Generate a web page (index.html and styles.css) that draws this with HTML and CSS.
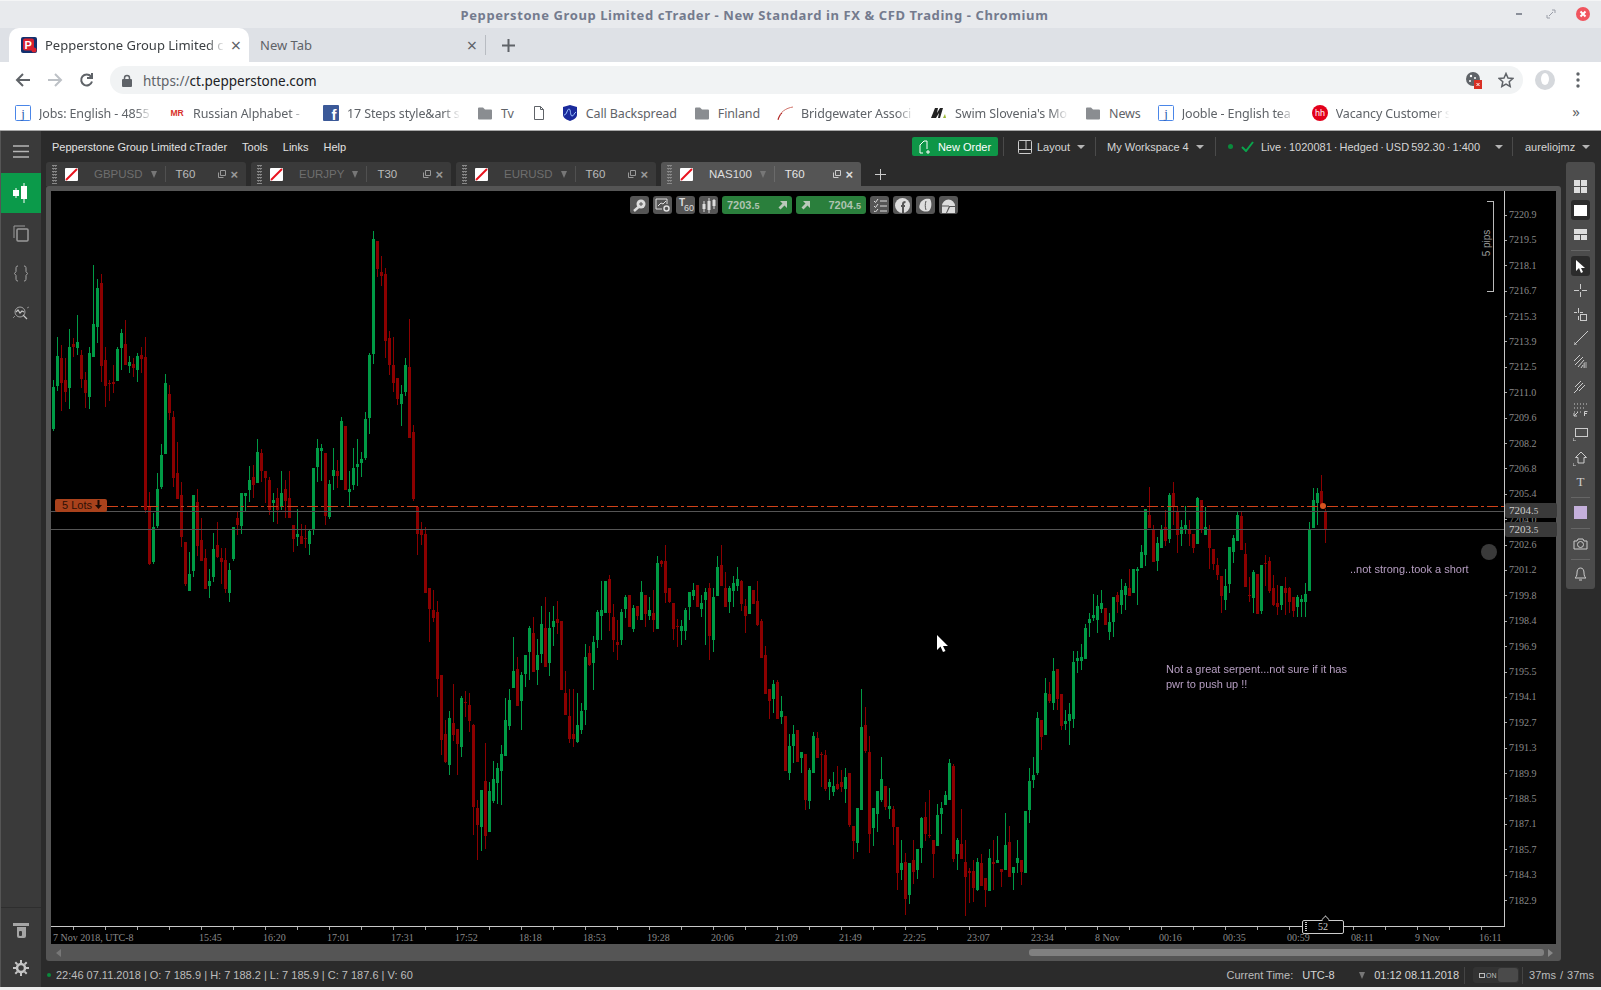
FILE: index.html
```html
<!DOCTYPE html>
<html lang="en">
<head>
    <meta charset="UTF-8">
    <title>Pepperstone Group Limited cTrader</title>
    <link rel="stylesheet" href="styles.css">
</head>
<body>

<!-- browser chrome -->
<div class="titlebar">
    <span class="title">Pepperstone Group Limited cTrader - New Standard in FX &amp; CFD Trading - Chromium</span>
    <div class="win-btns">
        <svg width="10" height="10" viewBox="0 0 10 10"><path d="M2 5h6" stroke="#8a8f99" stroke-width="2"/></svg>
        <svg width="10" height="10" viewBox="0 0 10 10"><path d="M6 1h3v3M4 9H1V6M3 7l4-4" stroke="#9a9ea8" fill="none"/></svg>
        <span class="win-close">
            <svg width="14" height="14" viewBox="0 0 14 14"><path d="M4.500 4.500l5 5M9.500 4.500l-5 5" stroke="#fff" stroke-width="2"/></svg>
        </span>
    </div>
</div>

<div class="tabstrip">
    <div class="tab active">
        <svg class="favicon" width="16" height="16" viewBox="0 0 16 16">
            <rect width="16" height="16" rx="2" fill="#12306e"/>
            <rect x="2" y="1.500" width="11" height="12" rx="2" fill="#d8212f"/>
            <text x="3.500" y="11.500" font-family="Liberation Sans" font-weight="700" font-size="11" fill="#fff">P</text>
            <circle cx="13" cy="13" r="2.500" fill="#d8212f"/>
        </svg>
        <span class="tab-title">Pepperstone Group Limited c</span>
        <span class="tab-x">×</span>
    </div>
    <div class="tab tab-plain">
        <span class="tab-title">New Tab</span>
        <span class="tab-x">×</span>
    </div>
    <span class="tab-sep"></span>
    <svg class="tab-new" width="13" height="13" viewBox="0 0 13 13"><path d="M6.500 0v13M0 6.500h13" stroke="#5f6368" stroke-width="2"/></svg>
</div>

<div class="toolbar">
    <svg class="nav" width="16" height="16" viewBox="0 0 16 16"><path d="M15 8H2M8 2L2 8l6 6" stroke="#5f6368" stroke-width="2" fill="none"/></svg>
    <svg class="nav" width="16" height="16" viewBox="0 0 16 16"><path d="M1 8h13M8 2l6 6-6 6" stroke="#bdc1c6" stroke-width="2" fill="none"/></svg>
    <svg class="nav" width="16" height="16" viewBox="0 0 16 16"><path d="M13 9.500A5.500 5.500 0 1 1 12 4.500M13 1v5H8" stroke="#5f6368" stroke-width="2" fill="none"/></svg>
    <div class="omnibox">
        <svg width="10" height="13" viewBox="0 0 10 13"><path d="M2.500 6V4a2.500 2.500 0 0 1 5 0v2" stroke="#5f6368" stroke-width="1.500" fill="none"/><rect y="5" width="10" height="8" rx="1" fill="#5f6368"/></svg>
        <span class="url"><span class="url-scheme">https://</span>ct.pepperstone.com</span>
        <svg class="omni-cookie" width="16" height="18" viewBox="0 0 16 18">
            <circle cx="7" cy="8" r="7" fill="#5f6368"/>
            <circle cx="5" cy="5" r="1.200" fill="#fff"/><circle cx="9" cy="7" r="1" fill="#fff"/><circle cx="4" cy="10" r="1" fill="#fff"/>
            <rect x="8" y="9" width="8" height="9" fill="#d93025"/>
            <path d="M10.500 12l3 3M13.500 12l-3 3" stroke="#fff"/>
        </svg>
        <svg class="omni-star" width="16" height="16" viewBox="0 0 16 16"><path d="M8 1.500l2 4.500 4.800.5-3.600 3.200 1 4.800L8 12.100l-4.200 2.400 1-4.800L1.200 6.500 6 6z" stroke="#5f6368" stroke-width="1.500" fill="none"/></svg>
    </div>
    <svg class="avatar" width="20" height="22" viewBox="0 0 20 22"><circle cx="10" cy="11" r="10" fill="#d5d8dc"/><ellipse cx="10" cy="10" rx="4" ry="6" fill="#fff"/></svg>
    <svg class="menu-dots" width="4" height="16" viewBox="0 0 4 16"><circle cx="2" cy="2" r="1.700" fill="#5f6368"/><circle cx="2" cy="8" r="1.700" fill="#5f6368"/><circle cx="2" cy="14" r="1.700" fill="#5f6368"/></svg>
</div>

<div class="bookmarks">
    <a class="bm">
        <svg class="bm-icon" viewBox="0 0 16 16"><rect x=".5" y=".5" width="15" height="15" rx="1" fill="#fff" stroke="#4a86e8"/><text x="8" y="13" text-anchor="middle" font-family="Liberation Serif" font-size="13" fill="#2a5db0">j</text></svg>
        <span class="bm-text fade">Jobs: English - 4855</span>
    </a>
    <a class="bm">
        <svg class="bm-icon" viewBox="0 0 16 16"><text x="8" y="11" text-anchor="middle" font-family="Liberation Sans" font-weight="700" font-size="8.500" fill="#d8312a">MR</text></svg>
        <span class="bm-text fade">Russian Alphabet -</span>
    </a>
    <a class="bm">
        <svg class="bm-icon" viewBox="0 0 16 16"><rect width="16" height="16" rx="1" fill="#3b5998"/><text x="11" y="15" text-anchor="middle" font-family="Liberation Sans" font-weight="700" font-size="15" fill="#fff">f</text></svg>
        <span class="bm-text fade">17 Steps style&amp;art s</span>
    </a>
    <a class="bm">
        <svg class="bm-icon"><use href="#folder"/></svg>
        <span class="bm-text">Tv</span>
    </a>
    <a class="bm bm-bare">
        <svg class="bm-icon" viewBox="0 0 16 16"><path d="M3.500 1.500h6l3 3v10h-9zM9.500 1.500v3h3" stroke="#5f6368" fill="#fff"/></svg>
    </a>
    <a class="bm">
        <svg class="bm-icon" viewBox="0 0 16 16"><path d="M1 2l7-2 7 2v8c0 3-4 5-7 6-3-1-7-3-7-6z" fill="#1a2a9c"/><path d="M2 10c3 0 3-6 5-6s1 7 3 7 2-3 4-4" stroke="#9ec5ff" fill="none"/></svg>
        <span class="bm-text">Call Backspread</span>
    </a>
    <a class="bm">
        <svg class="bm-icon"><use href="#folder"/></svg>
        <span class="bm-text">Finland</span>
    </a>
    <a class="bm">
        <svg class="bm-icon" viewBox="0 0 16 16"><path d="M1 14C3 7 9 3 16 2" stroke="#d0736a" fill="none"/><path d="M1 15c1-3 2-5 4-7" stroke="#b02020" fill="none"/></svg>
        <span class="bm-text fade">Bridgewater Associ</span>
    </a>
    <a class="bm">
        <svg class="bm-icon" viewBox="0 0 16 16"><path d="M0 13L4 3h3l-1 5 3-5h3l-3 10H7l1-5-3 5z" fill="#222"/><path d="M12 13l2-4 1 4z" fill="#9ab833"/></svg>
        <span class="bm-text fade">Swim Slovenia's Mo</span>
    </a>
    <a class="bm">
        <svg class="bm-icon"><use href="#folder"/></svg>
        <span class="bm-text">News</span>
    </a>
    <a class="bm">
        <svg class="bm-icon" viewBox="0 0 16 16"><rect x=".5" y=".5" width="15" height="15" rx="1" fill="#fff" stroke="#4a86e8"/><text x="8" y="13" text-anchor="middle" font-family="Liberation Serif" font-size="13" fill="#2a5db0">j</text></svg>
        <span class="bm-text fade">Jooble - English tea</span>
    </a>
    <a class="bm">
        <svg class="bm-icon" viewBox="0 0 16 16"><circle cx="8" cy="8" r="8" fill="#e3001b"/><text x="8" y="11" text-anchor="middle" font-family="Liberation Sans" font-size="9" fill="#fff">hh</text></svg>
        <span class="bm-text fade">Vacancy Customer s</span>
    </a>
    <span class="bm-more">»</span>
</div>

<svg class="defs" width="0" height="0">
    <symbol id="folder" viewBox="0 0 16 16"><path d="M1 3.500a1 1 0 0 1 1-1h4l2 2h6a1 1 0 0 1 1 1v8a1 1 0 0 1-1 1H2a1 1 0 0 1-1-1z" fill="#8a8d91"/></symbol>
    <symbol id="no-chart" viewBox="0 0 13 13"><rect width="13" height="13" rx="1" fill="#fff"/><path d="M1 12L12 1" stroke="#e8121d" stroke-width="2"/></symbol>
</svg>

<!-- cTrader -->
<div class="app">
    <aside class="rail">
        <div class="rail-item rail-menu">
            <svg width="16" height="13" viewBox="0 0 16 13"><path d="M0 1h16M0 6.500h16M0 12h16" stroke="#b5b5b5" stroke-width="1.500"/></svg>
        </div>
        <div class="rail-item rail-on">
            <svg width="16" height="20" viewBox="0 0 16 20"><path d="M3 5v10M11 0v20" stroke="#fff"/><rect x="0" y="7" width="6" height="6" fill="#fff"/><rect x="8" y="3" width="6" height="13" fill="#fff"/></svg>
        </div>
        <div class="rail-item">
            <svg width="16" height="17" viewBox="0 0 16 17"><path d="M12 1H1v12" stroke="#9a9a9a" fill="none"/><rect x="4" y="4" width="11" height="12" rx="1" stroke="#9a9a9a" fill="none" stroke-width="1.500"/></svg>
        </div>
        <div class="rail-item">
            <svg width="14" height="17" viewBox="0 0 14 17"><path d="M4 1C2 1 2 2 2 4v2.500L.5 8.500 2 10.500V13c0 2 0 3 2 3M10 1c2 0 2 1 2 3v2.500l1.500 2L12 10.500V13c0 2 0 3-2 3" stroke="#a5a5a5" fill="none"/></svg>
        </div>
        <div class="rail-item">
            <svg width="17" height="15" viewBox="0 0 17 15"><circle cx="7" cy="6" r="5" stroke="#a5a5a5" fill="none"/><path d="M3 6l2-2 2 3 2-2 2 1M10 9l4 4" stroke="#c5c5c5" stroke-width="1.200" fill="none"/><path d="M0 12l2-2M14 2l2-1" stroke="#888" fill="none"/></svg>
        </div>
        <div class="rail-bottom">
            <div class="rail-item rail-small">
                <svg width="16" height="15" viewBox="0 0 16 15"><path d="M0 0h16v3H0z" fill="#a5a5a5"/><path d="M4 4h9v9a2 2 0 0 1-2 2H6a2 2 0 0 1-2-2z" fill="#a5a5a5"/><rect x="6" y="8" width="3" height="5" rx="1" fill="#3a3a3a"/></svg>
            </div>
            <div class="rail-item rail-small">
                <svg width="16" height="16" viewBox="0 0 16 16"><circle cx="8" cy="8" r="4" stroke="#c5c5c5" stroke-width="2.500" fill="none"/><path d="M8 0v3M8 13v3M0 8h3M13 8h3M2.300 2.300l2.100 2.100M11.600 11.600l2.100 2.100M2.300 13.700l2.100-2.100M11.600 4.400l2.100-2.100" stroke="#c5c5c5" stroke-width="2"/></svg>
            </div>
        </div>
    </aside>

    <div class="main">
        <header class="menubar">
            <span class="brand">Pepperstone Group Limited cTrader</span>
            <span class="menu-link">Tools</span>
            <span class="menu-link">Links</span>
            <span class="menu-link">Help</span>
            <div class="menubar-right">
                <button class="new-order">
                    <svg width="12" height="14" viewBox="0 0 12 14"><path d="M1 13V5l4-4h3v8M4 13H1M9 10v4M7 12h4" stroke="#fff" fill="none"/></svg>
                    New Order
                </button>
                <div class="hdr-item hdr-layout">
                    <svg width="14" height="14" viewBox="0 0 14 14"><rect x=".5" y=".5" width="13" height="13" rx="1" stroke="#ccc" fill="none"/><path d="M.5 9.500h13M8 .5v9" stroke="#ccc"/></svg>
                    <span>Layout</span><i class="caret"></i>
                </div>
                <div class="hdr-item hdr-workspace">
                    <span>My Workspace 4</span><i class="caret"></i>
                </div>
                <div class="hdr-item hdr-account">
                    <i class="live-dot"></i>
                    <svg width="13" height="11" viewBox="0 0 13 11"><path d="M1 6l4 4 7-9" stroke="#0aa44c" stroke-width="2" fill="none"/></svg>
                    <span>Live · 1020081 · Hedged · USD 592.30 · 1:400</span><i class="caret"></i>
                </div>
                <div class="hdr-item hdr-user">
                    <span>aureliojmz</span><i class="caret"></i>
                </div>
            </div>
        </header>

        <div class="workspace">
            <div class="chart-col">
                <nav class="chart-tabs">
                    <div class="ctab">
                        <i class="grip"></i>
                        <svg class="ctab-icon"><use href="#no-chart"/></svg>
                        <span class="ctab-sym">GBPUSD</span><i class="caret caret-dim"></i>
                        <span class="ctab-sep"></span><span class="ctab-tf">T60</span>
                        <svg class="ctab-pop" width="8" height="8" viewBox="0 0 8 8"><path d="M2.500.5h5v5h-5zM.5 2.500v5h5" stroke="#999" fill="none"/></svg>
                        <span class="ctab-x">×</span>
                    </div>
                    <div class="ctab">
                        <i class="grip"></i>
                        <svg class="ctab-icon"><use href="#no-chart"/></svg>
                        <span class="ctab-sym">EURJPY</span><i class="caret caret-dim"></i>
                        <span class="ctab-sep"></span><span class="ctab-tf">T30</span>
                        <svg class="ctab-pop" width="8" height="8" viewBox="0 0 8 8"><path d="M2.500.5h5v5h-5zM.5 2.500v5h5" stroke="#999" fill="none"/></svg>
                        <span class="ctab-x">×</span>
                    </div>
                    <div class="ctab">
                        <i class="grip"></i>
                        <svg class="ctab-icon"><use href="#no-chart"/></svg>
                        <span class="ctab-sym">EURUSD</span><i class="caret caret-dim"></i>
                        <span class="ctab-sep"></span><span class="ctab-tf">T60</span>
                        <svg class="ctab-pop" width="8" height="8" viewBox="0 0 8 8"><path d="M2.500.5h5v5h-5zM.5 2.500v5h5" stroke="#999" fill="none"/></svg>
                        <span class="ctab-x">×</span>
                    </div>
                    <div class="ctab ctab-on">
                        <i class="grip"></i>
                        <svg class="ctab-icon"><use href="#no-chart"/></svg>
                        <span class="ctab-sym">NAS100</span><i class="caret caret-dim"></i>
                        <span class="ctab-sep"></span><span class="ctab-tf">T60</span>
                        <svg class="ctab-pop" width="8" height="8" viewBox="0 0 8 8"><path d="M2.500.5h5v5h-5zM.5 2.500v5h5" stroke="#ccc" fill="none"/></svg>
                        <span class="ctab-x">×</span>
                    </div>
                    <svg class="ctab-add" width="11" height="11" viewBox="0 0 11 11"><path d="M5.500 0v11M0 5.500h11" stroke="#ccc"/></svg>
                </nav>

                <section class="frame">
                    <div class="chart">
                        <div class="plot">
                            <svg id="candles" class="candles" width="1454" height="735" viewBox="51 191 1454 735"></svg>

                            <span class="line line-order"></span>
                            <span class="line line-bid"></span>
                            <span class="line line-ask"></span>
                            <span class="lots">5 Lots <svg width="7" height="9" viewBox="0 0 7 9"><path d="M2.500 0h2v5H7L3.500 9 0 5h2.500z" fill="#1f0b04"/></svg></span>
                            <span class="order-dot"></span>
                            <span class="note-dot"></span>
                            <p class="note note-serpent">Not a great serpent...not sure if it has<br>pwr to push up !!</p>
                            <p class="note note-short">..not strong..took a short</p>

                            <div class="pips"><span>5 pips</span></div>

                            <svg class="pointer" width="11" height="18" viewBox="0 0 11 18"><path d="M0 0v15l3.500-3.500L6 17l2.500-1-2.500-5h5z" fill="#fff"/></svg>

                            <div class="quick-bar">
                                <span class="qb">
                                    <svg width="13" height="13" viewBox="0 0 13 13"><circle cx="8" cy="5" r="4.500" fill="#ddd"/><path d="M5.500 8L1 12" stroke="#ddd" stroke-width="2.500"/><path d="M6 5h4M8 3v4" stroke="#555"/></svg>
                                </span>
                                <span class="qb">
                                    <svg width="15" height="14" viewBox="0 0 15 14"><path d="M7 11H1V1h11v5" stroke="#ddd" fill="none"/><path d="M3 8l3-3 2 1 3-3" stroke="#ddd" fill="none"/><circle cx="11.500" cy="10.500" r="2.500" stroke="#ddd" stroke-width="1.500" fill="none"/></svg>
                                </span>
                                <span class="qb qb-tf"><b>T</b><small>60</small></span>
                                <span class="qb">
                                    <svg width="14" height="15" viewBox="0 0 14 15"><path d="M2 3v11M7 0v15M12 1v10" stroke="#ddd"/><rect x=".5" y="6" width="3" height="5" fill="#ddd"/><rect x="5.500" y="3" width="3" height="9" fill="#ddd"/><rect x="10.500" y="2" width="3" height="6" fill="#ddd"/></svg>
                                </span>
                                <span class="qb-price">7203.<small>5</small><svg width="9" height="9" viewBox="0 0 9 9"><path d="M2 0h7v7L6.500 4.500 2.500 8.500 .5 6.500l4-4z" fill="#b9c9bb"/></svg></span>
                                <span class="qb-price qb-price-buy"><svg width="9" height="9" viewBox="0 0 9 9"><path d="M2 0h7v7L6.500 4.500 2.500 8.500 .5 6.500l4-4z" fill="#b9c9bb"/></svg>7204.<small>5</small></span>
                                <span class="qb">
                                    <svg width="14" height="13" viewBox="0 0 14 13"><path d="M1 2l1.500 1.500L5 0M1 7l1.500 1.500L5 5M1 12l1.500 1L5 10M7 2h7M7 7h7M7 12h7" stroke="#ddd" fill="none"/></svg>
                                </span>
                                <span class="qb">
                                    <svg width="15" height="15" viewBox="0 0 15 15"><circle cx="7.500" cy="7.500" r="7.500" fill="#ddd"/><path d="M8 15V8H10M8 8V6c0-1.500 1-2 2.500-2M6 8h2" stroke="#555" stroke-width="2" fill="none"/></svg>
                                </span>
                                <span class="qb">
                                    <svg width="15" height="15" viewBox="0 0 15 15"><path d="M2 6c1-4 6-6 10-5 2 3 2 9-1 12-3 1-6 1-9-2-1-1-1-3 0-5z" fill="#ddd"/><path d="M8 3c-1 3-1 6 0 9" stroke="#555" fill="none"/></svg>
                                </span>
                                <span class="qb">
                                    <svg width="15" height="15" viewBox="0 0 15 15"><path d="M1 8a6.500 6.500 0 0 1 13 0h-6l-3 7H1z" fill="#ddd"/><path d="M9 9h5v6H6z" fill="#ddd"/><path d="M1 8h7" stroke="#555"/></svg>
                                </span>
                            </div>
                        </div>

                        <div class="price-axis">
                            <span>7220.9</span><span>7219.5</span><span>7218.1</span><span>7216.7</span>
                            <span>7215.3</span><span>7213.9</span><span>7212.5</span><span>7211.0</span>
                            <span>7209.6</span><span>7208.2</span><span>7206.8</span><span>7205.4</span>
                            <span>7204.0</span><span>7202.6</span><span>7201.2</span><span>7199.8</span>
                            <span>7198.4</span><span>7196.9</span><span>7195.5</span><span>7194.1</span>
                            <span>7192.7</span><span>7191.3</span><span>7189.9</span><span>7188.5</span>
                            <span>7187.1</span><span>7185.7</span><span>7184.3</span><span>7182.9</span>
                            <div class="price-tag tag-bid">7204.<small>5</small></div>
                            <div class="price-tag tag-ask">7203.<small>5</small></div>
                        </div>

                        <div class="time-axis">
                            <span class="t-first">7 Nov 2018, UTC-8</span>
                            <span>15:45</span><span>16:20</span><span>17:01</span><span>17:31</span><span>17:52</span>
                            <span>18:18</span><span>18:53</span><span>19:28</span><span>20:06</span><span>21:09</span>
                            <span>21:49</span><span>22:25</span><span>23:07</span><span>23:34</span><span>8 Nov</span>
                            <span>00:16</span><span>00:35</span><span>00:59</span><span>08:11</span><span>9 Nov</span><span>16:11</span>
                            <div class="zoom-box"><i></i>52</div>
                        </div>
                    </div>
                    <div class="scroll">
                        <i class="arrow-left"></i>
                        <div class="scroll-thumb"></div>
                        <i class="arrow-right"></i>
                    </div>
                </section>
            </div>

            <aside class="tools">
                <i class="tools-grip"></i>
                <span class="tool"><svg width="13" height="13" viewBox="0 0 13 13"><path d="M0 0h6v6H0zM7 0h6v6H7zM0 7h6v6H0zM7 7h6v6H7z" fill="#ddd"/></svg></span>
                <span class="tool tool-on"><svg width="13" height="11" viewBox="0 0 13 11"><rect width="13" height="11" fill="#fff"/></svg></span>
                <span class="tool"><svg width="13" height="11" viewBox="0 0 13 11"><path d="M0 0h13v5H0zM0 6h6v5H0zM7 6h6v5H7z" fill="#ddd"/></svg></span>
                <i class="tool-sep"></i>
                <span class="tool tool-on"><svg width="11" height="13" viewBox="0 0 11 13"><path d="M1 0v11l3-3 2 5 2-1-2-4h4z" fill="#fff"/></svg></span>
                <span class="tool"><svg width="13" height="13" viewBox="0 0 13 13"><path d="M6.500 0v5M6.500 8v5M0 6.500h5M8 6.500h5" stroke="#ccc"/></svg></span>
                <span class="tool"><svg width="13" height="13" viewBox="0 0 13 13"><path d="M4.500 0v5M4.500 8v4M0 4.500h3M6 4.500h3" stroke="#ccc"/><rect x="6.500" y="6.500" width="6" height="6" stroke="#ccc" fill="none"/></svg></span>
                <span class="tool"><svg width="14" height="14" viewBox="0 0 14 14"><path d="M1 13L14 0" stroke="#ccc"/><path d="M0 11v3h3" stroke="#ccc" fill="none"/></svg></span>
                <span class="tool"><svg width="14" height="14" viewBox="0 0 14 14"><path d="M0 6l6-6M1 10l8-8M4 12l6-7M7 13l2-3" stroke="#ccc" fill="none"/><path d="M10 8h3M10 10h3M10 12h3M10 8v5" stroke="#ccc" stroke-width=".8"/></svg></span>
                <span class="tool"><svg width="13" height="13" viewBox="0 0 13 13"><path d="M1 7l6-6M3 9l6-6M5 11l6-6M0 13l4-4" stroke="#ccc" fill="none"/></svg></span>
                <span class="tool"><svg width="15" height="14" viewBox="0 0 15 14"><path d="M1 1h13M1 5h10M1 9h7" stroke="#ccc" stroke-dasharray="1 2"/><path d="M1 10v3h3M1 13l4-4" stroke="#ccc" fill="none"/><path d="M11.500 13V8.500h3M11.500 10.500h2.500" stroke="#ccc" fill="none"/></svg></span>
                <span class="tool"><svg width="15" height="13" viewBox="0 0 15 13"><rect x="2.500" y=".5" width="12" height="8" stroke="#ccc" fill="none"/><path d="M0 10v3h3" stroke="#ccc" fill="none"/></svg></span>
                <span class="tool"><svg width="15" height="15" viewBox="0 0 15 15"><path d="M8 1l5.500 5.500H11V12H5V6.500H2.500z" stroke="#ccc" fill="none"/><path d="M0 12v3h3" stroke="#ccc" fill="none"/></svg></span>
                <span class="tool tool-t">T</span>
                <i class="tool-sep thin"></i>
                <span class="tool"><i class="swatch"></i></span>
                <i class="tool-sep"></i>
                <span class="tool"><svg width="15" height="12" viewBox="0 0 15 12"><path d="M1 3h3l1-2h5l1 2h3v8H1z" stroke="#ccc" fill="none"/><circle cx="7.500" cy="6.500" r="3" stroke="#ccc" fill="none"/></svg></span>
                <i class="tool-sep thin"></i>
                <span class="tool"><svg width="13" height="14" viewBox="0 0 13 14"><path d="M1 11c1-1 2-2 2-5s1-5 3.500-5S10 3 10 6s1 4 2 5zM5 13h3" stroke="#ccc" fill="none"/></svg></span>
            </aside>
        </div>

        <footer class="statusbar">
            <i class="status-dot"></i>
            <span class="ohlc">22:46 07.11.2018 | O: 7 185.9 | H: 7 188.2 | L: 7 185.9 | C: 7 187.6 | V: 60</span>
            <div class="status-right">
                <span class="st-label">Current Time:</span>
                <span class="st-zone">UTC-8</span>
                <i class="caret caret-dim"></i>
                <span class="st-time">01:12 08.11.2018</span>
                <div class="st-toggle">
                    <svg width="6" height="5" viewBox="0 0 6 5"><rect x=".5" y=".5" width="5" height="4" stroke="#bbb" fill="none"/></svg>
                    <span>ON</span><i></i>
                </div>
                <span class="st-ping">37ms / 37ms</span>
            </div>
        </footer>
    </div>
</div>

<script src="chart.js"></script>
</body>
</html>
```

FILE: styles.css
```css
* {
    box-sizing: border-box;
}

html, body {
    margin: 0;
    height: 100%;
    overflow: hidden;
}

body {
    display: flex;
    flex-direction: column;
    background: #ededed;
    font-family: "Noto Sans", sans-serif;
}

i {
    display: block;
    font-style: normal;
}

.defs {
    position: absolute;
}

/* Browser window */
.titlebar {
    height: 28px;
    flex: none;
    position: relative;
    display: flex;
    align-items: center;
    justify-content: center;
    padding-right: 92px;
    background: #e8eaed;
    border-top: 1px solid #f4f5f6;
}

.title {
    font-size: 13px;
    font-weight: 700;
    letter-spacing: 0.6px;
    color: #747b8e;
}

.win-btns {
    position: absolute;
    right: 11px;
    top: 6px;
    display: flex;
    align-items: center;
    gap: 22px;
}

.win-close {
    width: 14px;
    height: 14px;
    margin-left: -2px;
    border-radius: 50%;
    background: #f0555f;
    display: flex;
    align-items: center;
    justify-content: center;
}

.tabstrip {
    height: 34px;
    flex: none;
    display: flex;
    align-items: center;
    padding-left: 9px;
    background: #dee1e6;
}

.tab {
    width: 240px;
    height: 34px;
    display: flex;
    align-items: center;
    padding: 0 8px 0 12px;
    border-radius: 10px 10px 0 0;
    color: #5f6368;
    font-size: 13px;
}

.tab.active {
    background: #fff;
    color: #3c4043;
}

.tab-plain {
    width: 236px;
    padding-left: 11px;
}

.favicon {
    margin-right: 8px;
    flex: none;
}

.tab-title {
    flex: 1;
    white-space: nowrap;
    overflow: hidden;
}

.tab.active .tab-title {
    -webkit-mask-image: linear-gradient(90deg, #000 90%, transparent);
    mask-image: linear-gradient(90deg, #000 90%, transparent);
}

.tab-x {
    font-size: 18px;
    line-height: 1;
    color: #5f6368;
    padding-left: 6px;
}

.tab-sep {
    width: 1px;
    height: 20px;
    background: #b8bcc2;
}

.tab-new {
    margin-left: 16px;
}

.toolbar {
    height: 36px;
    flex: none;
    display: flex;
    align-items: center;
    background: #fff;
    padding: 0 15px;
}

.nav {
    margin-right: 16px;
}

.omnibox {
    width: 1413px;
    height: 28px;
    margin-left: -1px;
    padding: 0 9px 0 12px;
    display: flex;
    align-items: center;
    border-radius: 14px;
    background: #f1f3f4;
}

.url {
    margin: 1px 0 0 11px;
    font-size: 13.500px;
    color: #202124;
}

.url-scheme {
    color: #5f6368;
}

.omni-cookie {
    margin-left: auto;
}

.omni-star {
    margin: 0 0 0 16px;
}

.avatar {
    margin-left: 12px;
}

.menu-dots {
    margin-left: 21px;
}

.bookmarks {
    height: 33px;
    flex: none;
    display: flex;
    align-items: center;
    padding: 0 0 2px 15px;
    background: #fff;
    border-bottom: 1px solid #a8a8a8;
    position: relative;
}

.bm {
    display: flex;
    align-items: center;
    gap: 8px;
    margin-right: 17px;
    font-size: 12.500px;
    letter-spacing: -0.12px;
    color: #5f6368;
}

.bm-bare {
    margin-right: 15px;
}

.bm-icon {
    width: 16px;
    height: 16px;
    flex: none;
}

.bm-text {
    white-space: nowrap;
}

.bm-text.fade {
    width: 117px;
    margin-right: -4px;
    overflow: hidden;
    -webkit-mask-image: linear-gradient(90deg, #000 82%, transparent 97%);
    mask-image: linear-gradient(90deg, #000 82%, transparent 97%);
}

.bm-more {
    position: absolute;
    right: 21px;
    top: 3px;
    font-size: 15px;
    color: #5f6368;
}

/* cTrader shell */
.app {
    height: 856px;
    flex: none;
    display: flex;
    background: #2b2b2b;
    color: #ddd;
    font: 11px "Liberation Sans", Arial, sans-serif;
}

.rail {
    width: 41px;
    flex: none;
    display: flex;
    flex-direction: column;
    background: #3a3a3a;
    border-left: 1px solid #555;
}

.rail-item {
    height: 40px;
    display: flex;
    align-items: center;
    justify-content: center;
}

.rail-menu {
    height: 42px;
    padding-bottom: 2px;
}

.rail-on {
    background: #0b9a4a;
}

.rail-bottom {
    margin-top: auto;
    padding-top: 3px;
    border-top: 1px solid #2e2e2e;
}

.rail-small {
    height: 38px;
}

.main {
    flex: 1;
    min-width: 0;
    display: flex;
    flex-direction: column;
}

.menubar {
    height: 31px;
    flex: none;
    display: flex;
    align-items: center;
    padding-left: 11px;
    gap: 15px;
    color: #e2e2e2;
}

.menubar-right {
    margin-left: auto;
    display: flex;
    align-items: center;
}

.new-order {
    width: 86px;
    height: 19px;
    margin-right: 5px;
    padding-left: 6px;
    display: flex;
    align-items: center;
    justify-content: center;
    gap: 7px;
    border: none;
    border-radius: 2px;
    background: #0e9647;
    color: #fff;
    font: inherit;
}

.hdr-item {
    height: 19px;
    display: flex;
    align-items: center;
    border-left: 1px solid #4a4a4a;
    color: #d5d5d5;
    white-space: nowrap;
}

.hdr-layout {
    width: 92px;
    padding-left: 14px;
    gap: 5px;
}

.hdr-layout .caret {
    margin-left: 2px;
}

.hdr-workspace {
    width: 120px;
    padding-left: 11px;
    gap: 7px;
}

.hdr-account {
    width: 297px;
    padding-left: 12px;
    word-spacing: -1px;
}

.hdr-account svg {
    margin: 0 7px 0 8px;
}

.hdr-account .caret {
    margin-left: 15px;
}

.hdr-user {
    width: 89px;
    padding-left: 12px;
    gap: 7px;
}

.caret {
    width: 0;
    height: 0;
    border-left: 4px solid transparent;
    border-right: 4px solid transparent;
    border-top: 4px solid #b5b5b5;
}

.caret-dim {
    border-left-width: 3.500px;
    border-right-width: 3.500px;
    border-top: 7px solid #777;
}

.live-dot {
    width: 5px;
    height: 5px;
    border-radius: 50%;
    background: #0a8a3c;
}

.workspace {
    flex: 1;
    min-height: 0;
    display: flex;
}

.chart-col {
    width: 1525px;
    flex: none;
    padding: 0 5px;
    display: flex;
    flex-direction: column;
}

/* Chart tabs */
.chart-tabs {
    height: 24px;
    flex: none;
    display: flex;
    align-items: center;
    gap: 5px;
}

.ctab {
    width: 200px;
    height: 24px;
    display: flex;
    align-items: center;
    padding: 0 8px 0 6px;
    border-radius: 3px 3px 0 0;
    background: #3a3a3a;
    color: #bbb;
}

.ctab-on {
    background: #555;
    color: #e5e5e5;
}

.grip {
    width: 5px;
    height: 20px;
    background: radial-gradient(circle, #8a8a8a 1px, transparent 1px) 0 0 / 2.500px 3px;
}

.ctab-icon {
    width: 13px;
    height: 13px;
    margin-left: 8px;
}

.ctab-sym {
    margin-left: 16px;
    color: #6e6e6e;
    font-size: 11.500px;
}

.ctab-on .ctab-sym {
    color: #ddd;
}

.ctab .caret {
    margin-left: 8px;
}

.ctab-sep {
    width: 1px;
    height: 16px;
    margin: 0 10px 0 8px;
    background: #505050;
}

.ctab-on .ctab-sep {
    background: #6a6a6a;
}

.ctab-tf {
    font-size: 11.500px;
}

.ctab-pop {
    margin-left: auto;
}

.ctab-x {
    margin-left: 4px;
    font-size: 13px;
    font-weight: 700;
    color: #999;
}

.ctab-on .ctab-x {
    color: #ddd;
}

.ctab-add {
    margin-left: 9px;
}

/* Chart */
.frame {
    flex: 1;
    padding: 5px 5px 0;
    border-radius: 3px;
    background: #555;
}

.chart {
    height: 753px;
    position: relative;
    display: grid;
    grid-template-columns: 1454px 51px;
    grid-template-rows: 735px 18px;
    background: #000;
    color: #8a8a8a;
    font: 10px "Liberation Serif", serif;
}

.plot {
    position: relative;
    overflow: hidden;
}

.candles {
    display: block;
}

.line {
    position: absolute;
    left: 0;
    right: 0;
    height: 1px;
    background: #555;
}

.line-bid {
    top: 320px;
}

.line-ask {
    top: 338px;
}

.line-order {
    left: 56px;
    top: 315px;
    background: repeating-linear-gradient(90deg, #d0431a 0 11px, transparent 11px 14px, #d0431a 14px 17px, transparent 17px 20px);
}

.lots {
    position: absolute;
    left: 4px;
    top: 308px;
    width: 52px;
    height: 13px;
    padding-left: 7px;
    border-radius: 2px;
    background: #a9421c;
    color: #2e1006;
    font: 11px/13px "Liberation Sans", sans-serif;
}

.order-dot {
    position: absolute;
    left: 1269px;
    top: 312px;
    width: 6px;
    height: 6px;
    border-radius: 50%;
    background: #d8531f;
}

.note-dot {
    position: absolute;
    left: 1430px;
    top: 353px;
    width: 16px;
    height: 16px;
    border-radius: 50%;
    background: #3a3a3a;
}

.note {
    position: absolute;
    margin: 0;
    color: #b8a0c4;
    font: 11px/15px "Liberation Sans", sans-serif;
    white-space: nowrap;
    opacity: .99;
}

.note-serpent {
    left: 1115px;
    top: 471px;
}

.note-short {
    left: 1299px;
    top: 371px;
}

.pips {
    position: absolute;
    left: 1436px;
    top: 10px;
    width: 7px;
    height: 91px;
    border: 1px solid #bbb;
    border-left: none;
}

.pips span {
    position: absolute;
    left: -13px;
    top: 35px;
    color: #999;
    font: 10px/12px "Liberation Sans", sans-serif;
    white-space: nowrap;
    transform: rotate(-90deg);
}

.pointer {
    position: absolute;
    left: 886px;
    top: 444px;
}

.quick-bar {
    position: absolute;
    left: 579px;
    top: 5px;
    display: flex;
    gap: 4px;
}

.qb {
    width: 19px;
    height: 18px;
    display: flex;
    align-items: center;
    justify-content: center;
    border-radius: 3px;
    background: #555;
    color: #ddd;
}

.qb-tf {
    position: relative;
    font: 10px "Liberation Sans", sans-serif;
}

.qb-tf b {
    position: absolute;
    left: 3px;
    top: 1px;
}

.qb-tf small {
    position: absolute;
    right: 1px;
    bottom: 1px;
    font-size: 9px;
}

.qb-price {
    width: 70px;
    height: 18px;
    display: flex;
    align-items: baseline;
    padding: 0 5px;
    border-radius: 3px;
    background: #2a7f3c;
    color: #afc3b1;
    font: 700 11px/18px "Liberation Sans", sans-serif;
}

.qb-price small {
    font-size: 9px;
}

.qb-price svg {
    margin-left: auto;
    align-self: center;
}

.qb-price-buy {
    justify-content: flex-end;
}

.qb-price-buy svg {
    margin: 0 auto 0 0;
}

/* Axes */
.price-axis {
    position: relative;
    padding-top: 11px;
    border-left: 1px solid #c8c8c8;
    margin-left: -1px;
}

.price-axis > span {
    display: block;
    height: 25.400px;
    line-height: 25.400px;
    padding-left: 4px;
    background: linear-gradient(#aaa, #aaa) 0 12.500px / 2px 1px no-repeat;
}

.price-tag {
    position: absolute;
    left: 0;
    width: 52px;
    height: 15px;
    padding-left: 4px;
    border-radius: 2px;
    background: #3a3a3a;
    color: #ccc;
    font: 11px/15px "Liberation Serif", serif;
}

.price-tag small {
    font-size: 9px;
}

.tag-bid {
    top: 312px;
}

.tag-ask {
    top: 331px;
}

.time-axis {
    grid-column: 1 / 3;
    position: relative;
    display: flex;
    width: 1454px;
    padding: 5px 0 0 2px;
    border-top: 1px solid #c8c8c8;
    background: linear-gradient(90deg, #aaa 1px, transparent 1px) 22px 0 / 32px 3px repeat-x;
}

.time-axis span {
    width: 64px;
    flex: none;
}

.time-axis .t-first {
    width: 146px;
}

.zoom-box {
    position: absolute;
    left: 1251px;
    top: -7px;
    width: 42px;
    height: 14px;
    border: 1px solid #ccc;
    border-radius: 2px;
    background: #000;
    color: #ccc;
    line-height: 12px;
    text-align: center;
}

.zoom-box::before {
    content: "";
    position: absolute;
    left: 19px;
    top: -5px;
    width: 6px;
    height: 6px;
    border-left: 1px solid #ccc;
    border-top: 1px solid #ccc;
    background: #000;
    transform: rotate(45deg) scale(.8);
}

.zoom-box i {
    position: absolute;
    left: 2px;
    top: 1px;
    width: 2px;
    height: 10px;
    background: repeating-linear-gradient(#ccc 0 1px, transparent 1px 2px);
}

.scroll {
    height: 17px;
    display: flex;
    align-items: center;
    padding: 0 3px 0 5px;
}

.arrow-left, .arrow-right {
    width: 0;
    height: 0;
    border-top: 4px solid transparent;
    border-bottom: 4px solid transparent;
}

.arrow-left {
    border-right: 5px solid #777;
}

.arrow-right {
    border-left: 5px solid #888;
}

.scroll-thumb {
    width: 515px;
    height: 7px;
    margin: 0 4px 0 auto;
    border-radius: 3px;
    background: #808080;
}

/* Drawing tools */
.tools {
    width: 29px;
    height: 427px;
    flex: none;
    padding-top: 4px;
    border-radius: 3px;
    background: #4c4c4c;
}

.tools-grip {
    height: 8px;
    margin: 0 5px;
    background: radial-gradient(circle, #8a8a8a .7px, transparent .7px) 0 0 / 2px 2px;
}

.tool {
    height: 24px;
    display: flex;
    align-items: center;
    justify-content: center;
    position: relative;
    color: #ccc;
}

.tool-on::before {
    content: "";
    position: absolute;
    left: 5px;
    top: 2px;
    width: 19px;
    height: 20px;
    border-radius: 3px;
    background: #2b2b2b;
}

.tool-on svg {
    position: relative;
}

.tool-t {
    font: 13px "Liberation Serif", serif;
}

.tool-sep {
    height: 8px;
    margin: 0 5px;
    background: linear-gradient(#666, #666) 0 50% / 100% 1px no-repeat;
}

.tool-sep.thin {
    height: 6px;
}

.swatch {
    width: 13px;
    height: 13px;
    background: #c5b0dc;
}

/* Status bar */
.statusbar {
    height: 26px;
    flex: none;
    display: flex;
    align-items: center;
    padding: 2px 7px 0 6px;
    color: #bdbdbd;
}

.status-dot {
    width: 4px;
    height: 4px;
    margin-right: 5px;
    border-radius: 50%;
    background: #0a8a3c;
}

.status-right {
    margin-left: auto;
    display: flex;
    align-items: center;
}

.st-zone {
    width: 57px;
    margin-left: 9px;
    color: #d5d5d5;
}

.st-time {
    margin-left: 9px;
    padding-right: 5px;
    border-right: 1px solid #444;
    color: #d5d5d5;
    line-height: 17px;
}

.st-toggle {
    width: 46px;
    height: 16px;
    margin: 0 3px 0 8px;
    padding: 1px 1px 1px 6px;
    display: flex;
    align-items: center;
    gap: 1px;
    border-radius: 3px;
    background: #333;
}

.st-toggle span {
    font-size: 7px;
}

.st-toggle i {
    width: 20px;
    height: 14px;
    margin-left: auto;
    border-radius: 3px;
    background: #4a4a4a;
}

.st-ping {
    padding-left: 6px;
    border-left: 1px solid #444;
    line-height: 17px;
    word-spacing: 1px;
}
```

FILE: chart.js
```js
// NAS100 T60 bars, read off in screen pixels: [up, bodyTop, bodyBottom, high, low]
const bars = [
    [1,387,429,380,431],[1,356,386,337,391],[0,358,383,345,411],[0,380,392,358,402],[1,347,388,329,409],[0,344,347,338,357],
    [1,342,348,315,355],[0,355,379,350,388],[0,380,393,372,408],[1,353,397,347,409],[1,324,357,265,357],[1,288,327,279,343],
    [0,283,366,274,382],[0,360,386,347,407],[0,383,384,380,401],[0,382,384,365,393],[1,349,381,347,381],[1,333,348,329,370],
    [0,344,365,320,365],[1,362,366,356,373],[0,364,368,358,377],[1,356,370,353,382],[0,355,359,347,373],[0,357,510,337,513],
    [0,507,564,492,565],[1,527,562,513,564],[1,489,526,473,528],[1,455,487,444,489],[1,383,454,374,454],[0,394,413,385,420],
    [0,417,478,411,487],[0,473,499,442,499],[0,495,537,482,547],[0,542,584,542,586],[1,574,591,552,591],[1,495,571,495,577],
    [0,502,546,489,556],[0,540,561,518,561],[0,558,589,549,589],[1,581,586,569,598],[1,549,577,533,582],[0,545,557,522,558],
    [0,558,562,548,584],[0,560,589,548,593],[1,570,593,563,602],[1,527,559,527,561],[0,518,525,512,535],[1,493,526,493,534],
    [1,493,496,493,512],[1,480,490,466,502],[0,477,485,465,498],[1,452,483,439,483],[0,453,471,449,482],[0,471,478,471,503],
    [0,480,510,477,515],[1,500,503,493,522],[0,498,510,488,524],[1,493,507,471,510],[0,489,501,480,518],[0,498,518,471,518],
    [0,525,539,525,552],[1,534,537,509,546],[0,536,544,524,544],[0,538,539,525,548],[1,531,544,529,555],[1,468,529,468,535],
    [1,448,467,439,482],[1,448,451,444,481],[0,453,516,453,525],[1,484,517,480,519],[1,470,476,448,490],[0,471,476,460,488],
    [1,421,480,417,480],[0,426,490,426,490],[1,489,492,471,507],[1,468,485,448,490],[1,464,467,439,486],[1,459,463,452,477],
    [1,419,458,412,460],[1,355,418,353,434],[1,239,354,231,364],[0,241,269,241,277],[0,272,276,256,286],[0,274,341,268,358],
    [0,338,365,331,375],[0,365,383,337,392],[0,378,399,378,405],[1,394,404,385,426],[1,365,392,358,396],[0,367,438,319,438],
    [0,432,499,425,501],[0,507,534,507,555],[0,530,535,522,545],[0,534,593,527,593],[0,588,609,588,642],[0,610,618,590,622],
    [0,612,679,601,697],[0,675,740,675,755],[0,734,762,720,763],[1,718,765,711,775],[0,723,735,684,741],[0,729,744,729,775],
    [1,698,747,696,757],[0,702,703,691,717],[0,705,721,693,732],[0,725,807,724,835],[0,808,825,800,860],[1,790,827,790,851],
    [0,781,836,743,849],[1,791,832,782,832],[1,779,801,761,803],[1,768,783,763,804],[1,754,771,745,805],[1,720,756,698,756],
    [1,700,726,689,730],[1,671,688,637,688],[0,669,706,657,706],[1,675,701,672,730],[1,655,674,655,687],[1,628,652,626,680],
    [0,633,672,617,672],[1,655,670,639,685],[1,624,654,606,663],[0,628,667,597,667],[1,628,663,612,676],[1,621,627,606,646],
    [0,619,623,601,634],[0,621,690,621,690],[0,693,715,671,715],[0,716,739,689,743],[0,734,739,689,747],[1,725,742,693,743],
    [1,711,730,703,734],[1,657,710,644,725],[0,653,665,646,666],[1,642,663,636,690],[1,612,640,610,648],[1,610,616,581,640],
    [1,581,613,581,613],[0,579,613,575,631],[0,617,640,604,652],[0,642,645,620,660],[1,612,640,609,645],[1,597,609,595,618],
    [0,595,627,595,627],[1,608,629,605,632],[0,606,616,606,620],[1,592,620,581,620],[0,595,614,595,627],[1,610,616,597,620],
    [0,613,620,590,632],[1,563,629,556,629],[0,561,564,560,567],[0,561,593,545,603],[0,588,602,588,603],[0,603,629,603,640],
    [0,626,627,619,647],[1,626,631,620,645],[1,610,631,608,640],[1,592,607,592,620],[1,590,596,583,600],[0,585,607,585,607],
    [1,603,609,595,617],[1,592,600,588,645],[0,588,636,583,660],[1,597,640,588,652],[1,567,596,556,596],[0,565,586,545,586],
    [0,588,607,572,607],[1,588,602,586,613],[1,583,591,576,607],[1,579,586,567,591],[0,581,604,580,611],[0,606,616,599,633],
    [1,586,614,586,614],[0,590,604,590,604],[0,601,625,581,626],[0,621,658,619,658],[0,655,694,646,694],[0,689,701,689,719],
    [1,684,699,680,713],[0,682,719,680,719],[1,711,717,696,724],[0,716,771,716,771],[1,746,773,734,780],[1,734,746,725,763],
    [0,730,762,730,762],[1,752,758,752,773],[0,754,800,754,810],[1,770,801,768,809],[1,736,773,732,773],[0,738,758,732,758],
    [0,754,755,752,787],[0,755,789,750,791],[1,782,787,779,800],[1,786,792,772,796],[0,784,789,766,790],[0,782,787,770,792],
    [1,777,789,768,803],[0,773,825,773,827],[0,826,841,826,859],[1,808,843,808,852],[1,727,810,689,810],[0,725,751,707,753],
    [0,752,834,736,853],[1,808,828,808,846],[1,791,814,791,832],[1,779,800,757,802],[0,786,807,786,810],[1,806,809,788,819],
    [0,809,827,806,845],[0,827,873,827,890],[1,863,870,840,880],[0,862,899,853,915],[1,863,895,863,904],[0,860,872,840,884],
    [1,849,870,849,879],[1,818,848,817,863],[0,817,834,802,841],[0,835,836,790,838],[0,840,854,840,878],[1,815,846,804,846],
    [1,808,814,802,834],[1,795,805,791,805],[1,763,800,759,800],[0,766,859,764,862],[1,840,854,838,870],[0,844,859,809,859],
    [0,862,877,840,916],[0,871,873,868,903],[0,871,888,860,902],[1,862,890,858,891],[0,863,886,854,886],[0,878,890,878,907],
    [1,858,891,849,891],[0,862,864,840,890],[1,860,863,836,863],[0,869,872,869,887],[1,845,870,813,870],[0,842,877,826,877],
    [1,867,873,867,890],[1,858,863,840,873],[0,860,872,860,885],[1,811,873,811,873],[1,781,810,768,823],[1,775,780,757,788],
    [1,718,773,712,775],[0,720,737,720,750],[1,693,735,678,735],[0,694,701,682,703],[1,671,703,658,710],[0,669,699,669,710],
    [0,694,726,694,730],[1,721,724,710,730],[1,714,721,703,745],[1,662,719,651,728],[1,658,661,651,673],[1,657,661,644,670],
    [1,628,659,624,659],[1,619,623,613,637],[1,615,618,594,621],[1,606,620,595,633],[1,603,609,590,613],[0,608,625,608,625],
    [1,622,632,613,640],[1,597,622,597,637],[0,595,602,592,613],[1,590,605,579,614],[1,586,595,583,610],[0,588,596,569,596],
    [1,569,593,569,593],[1,569,571,567,605],[1,552,568,545,568],[1,509,555,509,566],[0,515,528,487,528],[0,529,562,525,562],
    [1,543,561,537,571],[1,529,548,525,548],[0,527,541,510,546],[1,495,539,493,543],[0,493,507,482,525],[0,511,535,507,553],
    [1,527,534,520,546],[1,525,529,506,534],[0,529,534,520,546],[0,534,548,534,553],[1,498,544,497,544],[0,500,529,500,533],
    [1,527,535,507,535],[0,530,548,525,569],[0,549,564,549,570],[0,565,575,558,580],[0,576,596,576,613],[1,586,600,569,610],
    [1,547,584,547,593],[1,538,552,535,563],[1,515,541,512,541],[0,516,550,512,550],[0,554,587,543,587],[0,595,596,577,602],
    [1,572,598,570,613],[0,574,614,574,614],[1,565,611,565,614],[0,563,564,555,586],[0,561,591,557,593],[0,588,605,575,606],
    [0,603,607,585,615],[1,586,605,586,610],[0,588,593,577,615],[0,588,602,587,613],[0,597,611,597,617],[1,597,607,595,617],
    [1,599,602,595,617],[1,594,602,583,617],[1,530,591,522,591],[1,500,528,488,528],[1,493,503,488,525],[0,491,506,475,506],
    [0,511,529,509,543]
];

const svg = document.getElementById('candles');
const NS = 'http://www.w3.org/2000/svg';

function addRect(x, y, w, h, fill) {
    const r = document.createElementNS(NS, 'rect');
    r.setAttribute('x', x);
    r.setAttribute('y', y);
    r.setAttribute('width', w);
    r.setAttribute('height', h);
    r.setAttribute('fill', fill);
    r.setAttribute('shape-rendering', 'crispEdges');
    svg.appendChild(r);
}

bars.forEach(function (bar, i) {
    const x = 52 + i * 4;
    const fill = bar[0] ? '#009a45' : '#8b0000';
    addRect(x + 1, bar[3], 1, bar[4] - bar[3], fill);
    addRect(x, bar[1], 3, Math.max(bar[2] - bar[1], 1), fill);
});
```
